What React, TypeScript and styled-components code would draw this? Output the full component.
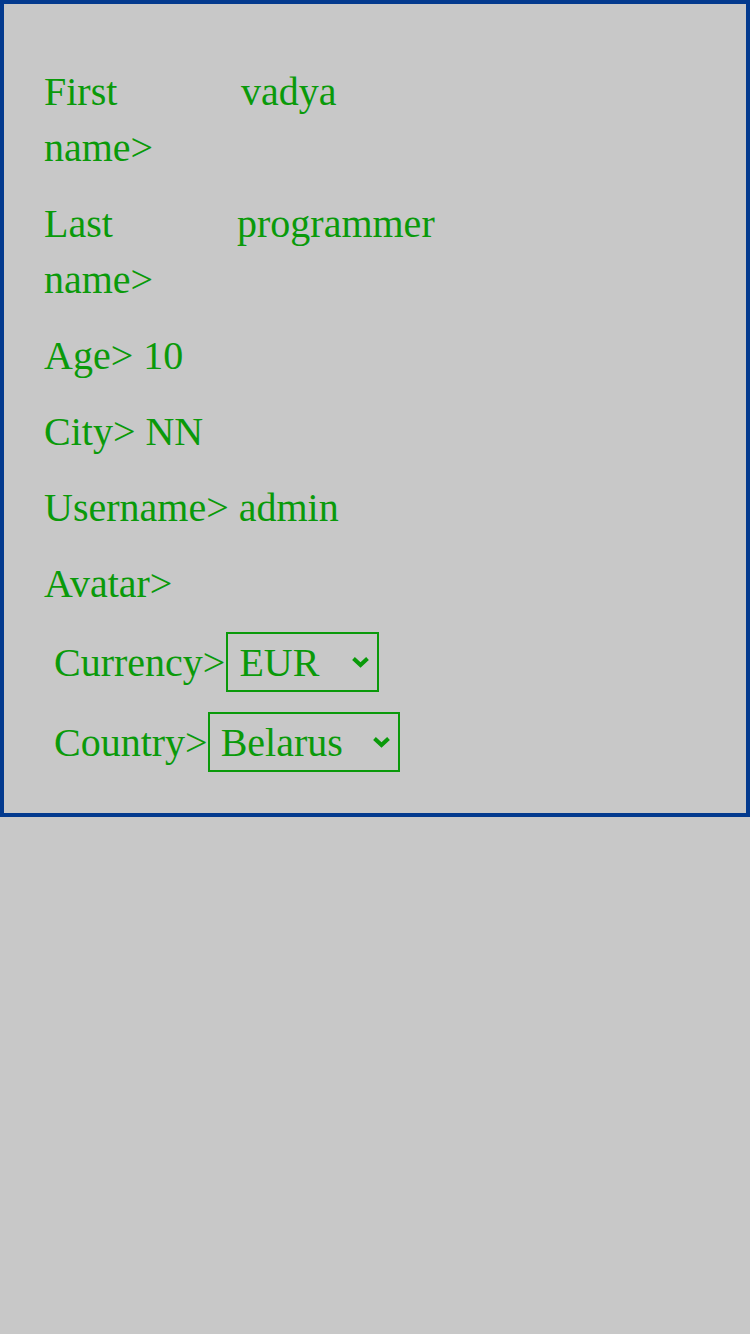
import styled, { createGlobalStyle } from 'styled-components';

const GlobalStyle = createGlobalStyle`
  html, body {
    margin: 0;
    padding: 0;
    background: #c8c8c8;
  }
  body {
    font-family: "Liberation Serif", "Times New Roman", serif;
  }
`;

const Profile = styled.div`
  border: 4px solid #033a8e;
  padding: 60px 40px 41px 40px;
  color: #0a9a0a;
  font-size: 40px;
  line-height: 56px;
`;

const Row = styled.div`
  margin-bottom: 20px;
`;

const NameRow = styled.div`
  display: flex;
  align-items: flex-start;
  margin-bottom: 20px;
`;

const NameLabel = styled.div`
  width: 120px;
  flex-shrink: 0;
`;

const NameValue = styled.div<{ $offset: number }>`
  margin-left: ${(p) => p.$offset}px;
`;

const SelectRow = styled.div`
  display: flex;
  align-items: baseline;
  margin: 0 0 20px 10px;
  &:last-child {
    margin-bottom: 0;
  }
`;

const SelectWrap = styled.div<{ $gap: number }>`
  position: relative;
  display: inline-flex;
  margin-left: ${(p) => p.$gap}px;
`;

const Select = styled.select<{ $width: number }>`
  appearance: none;
  -webkit-appearance: none;
  font-family: "Liberation Serif", "Times New Roman", serif;
  font-size: 40px;
  color: #0a9a0a;
  background: transparent;
  border: 2px solid #0a9a0a;
  border-radius: 0;
  height: 60px;
  width: ${(p) => p.$width}px;
  padding: 0 8px 0 11px;
  outline: none;
`;

const Chevron = styled.svg`
  position: absolute;
  right: 9px;
  top: 50%;
  margin-top: -6px;
  width: 19px;
  height: 12px;
  pointer-events: none;
`;

function Dropdown({ width, gap, value, options }: { width: number; gap: number; value: string; options: string[] }) {
  return (
    <SelectWrap $gap={gap}>
      <Select $width={width} defaultValue={value}>
        {options.map((o) => (
          <option key={o}>{o}</option>
        ))}
      </Select>
      <Chevron viewBox="0 0 19 12">
        <polyline points="2.5,2.5 9.5,9 16.5,2.5" fill="none" stroke="#0a9a0a" strokeWidth="4" />
      </Chevron>
    </SelectWrap>
  );
}

export default function App() {
  return (
    <>
      <GlobalStyle />
      <Profile>
        <NameRow>
          <NameLabel>First name&gt;</NameLabel>
          <NameValue $offset={77}>vadya</NameValue>
        </NameRow>
        <NameRow>
          <NameLabel>Last name&gt;</NameLabel>
          <NameValue $offset={73}>programmer</NameValue>
        </NameRow>
        <Row>Age&gt; 10</Row>
        <Row>City&gt; NN</Row>
        <Row>Username&gt; admin</Row>
        <Row>Avatar&gt;</Row>
        <SelectRow>
          Currency&gt;
          <Dropdown width={153} gap={1} value="EUR" options={['USD', 'EUR', 'RUB']} />
        </SelectRow>
        <SelectRow>
          Country&gt;
          <Dropdown width={192} gap={0} value="Belarus" options={['Russia', 'Belarus', 'Ukraine']} />
        </SelectRow>
      </Profile>
    </>
  );
}
